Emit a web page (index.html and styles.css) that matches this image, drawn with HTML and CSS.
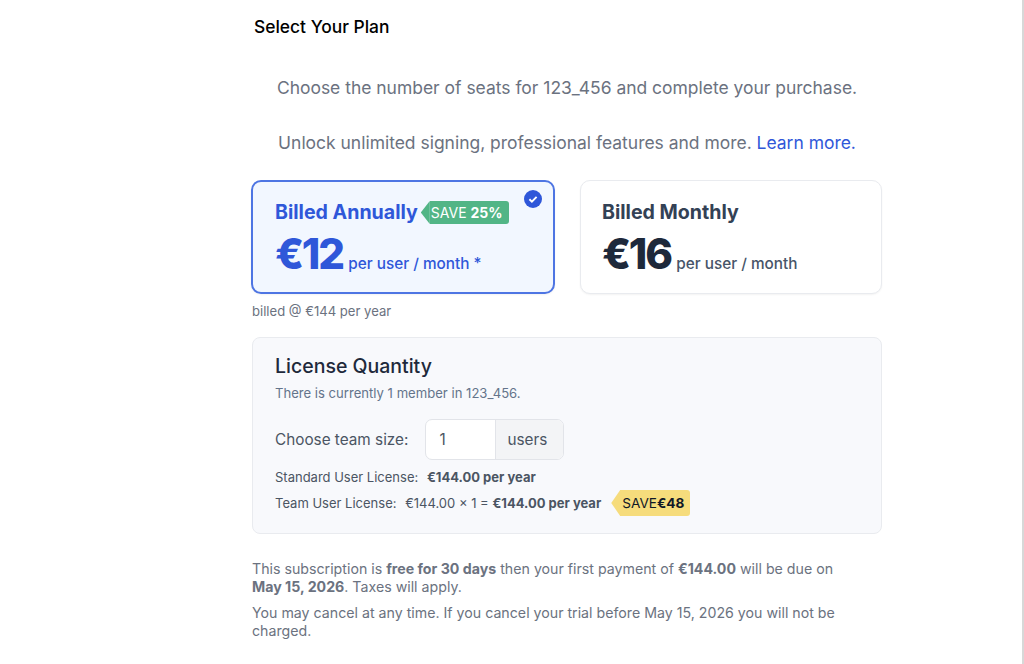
FILE: index.html
```html
<!DOCTYPE html>
<html lang="en">
<head>
  <meta charset="UTF-8" />
  <title>Select Your Plan</title>
  <link rel="stylesheet" href="styles.css">
</head>
<body>

<div class="page">
  <h1 class="page-title">Select Your Plan</h1>

  <div class="intro">
    <p>Choose the number of seats for 123_456 and complete your purchase.</p>
    <p>Unlock unlimited signing, professional features and more. <a href="#">Learn more.</a></p>
  </div>

  <div class="plans">
    <div class="plan-col">
      <div class="plan selected">
        <svg class="check" viewBox="0 0 18 18" width="18" height="18">
          <circle cx="9" cy="9" r="9" fill="#2f57d9"/>
          <path d="M5.4 9.2l2.5 2.4 4.7-4.8" fill="none" stroke="#fff" stroke-width="1.9"/>
        </svg>
        <div class="plan-head">
          <span class="plan-name">Billed Annually</span>
          <span class="tag tag-green">SAVE <b>25%</b></span>
        </div>
        <div class="plan-price"><span class="amount">€12</span> <span class="per">per user / month *</span></div>
      </div>
      <div class="billed-note">billed @ €144 per year</div>
    </div>

    <div class="plan-col">
      <div class="plan">
        <div class="plan-head">
          <span class="plan-name">Billed Monthly</span>
        </div>
        <div class="plan-price"><span class="amount">€16</span> <span class="per">per user / month</span></div>
      </div>
    </div>
  </div>

  <div class="quantity">
    <h2>License Quantity</h2>
    <div class="members">There is currently 1 member in 123_456.</div>
    <div class="team-size">
      <label>Choose team size:</label>
      <div class="seat-input">
        <span class="seat-value">1</span>
        <span class="seat-unit">users</span>
      </div>
    </div>
    <div class="line">Standard User License: <b class="first">€144.00 per year</b></div>
    <div class="line team-line">
      <span>Team User License: <span class="first">€144.00 × 1 =</span> <b>€144.00 per year</b></span>
      <span class="tag tag-yellow">SAVE<b>€48</b></span>
    </div>
  </div>

  <div class="terms">
    <p>This subscription is <b>free for 30 days</b> then your first payment of <b>€144.00</b> will be due on <b>May 15, 2026</b>. Taxes will apply.</p>
    <p>You may cancel at any time. If you cancel your trial before May 15, 2026 you will not be charged.</p>
  </div>
</div>

</body>
</html>
```

FILE: styles.css
```css
* {
  box-sizing: border-box;
}

html, body {
  height: 100%;
}

body {
  margin: 0;
  background: #fff;
  font-family: 'Inter', sans-serif;
  color: #6b7280;
  overflow: hidden;
  border-right: 2px solid #d8d8d8;
}

.page {
  width: 630px;
  margin-left: 252px;
}

.page-title {
  margin: 0;
  padding: 17px 0 0 2px;
  font-size: 17.4px;
  line-height: 20px;
  font-weight: 500;
  color: #000;
}

.intro {
  margin-top: 39px;
  text-align: center;
  font-size: 17.47px;
  line-height: 24px;
}

.intro p {
  margin: 0 0 31px;
}

.intro a {
  color: #2f57d9;
  text-decoration: none;
}

.plans {
  display: flex;
  gap: 25px;
  margin-top: -6px;
}

.plan-col:first-child {
  width: 303px;
}

.plan-col:last-child {
  width: 302px;
}

.plan {
  position: relative;
  height: 114px;
  padding: 19px 21px;
  background: #fff;
  border: 1px solid #e9ebef;
  border-radius: 10px;
  box-shadow: 0 1px 2px rgba(0, 0, 0, 0.05);
  color: #334155;
}

.plan.selected {
  width: 304px;
  margin-left: -1px;
  background: #f2f7ff;
  border: 2px solid #4e75e3;
  color: #2f57d9;
  padding: 18px 22px;
}

.check {
  position: absolute;
  top: 8px;
  right: 11px;
}

.plan-head {
  display: flex;
  align-items: center;
  height: 24px;
}

.plan-name {
  font-size: 19.6px;
  font-weight: 700;
  white-space: nowrap;
}

.plan-price {
  margin-top: 6px;
  white-space: nowrap;
}

.amount {
  font-size: 42px;
  line-height: 48px;
  font-weight: 800;
  letter-spacing: -2.2px;
  color: #1e293b;
}

.per {
  font-size: 15.3px;
  font-weight: 500;
  color: #475569;
  margin-left: 1px;
}

.selected .amount,
.selected .per {
  color: #2f57d9;
}

.tag {
  position: relative;
  display: inline-block;
  border-radius: 0 3px 3px 0;
  white-space: nowrap;
}

.tag::before {
  content: "";
  position: absolute;
  top: 0;
  bottom: 0;
  left: -9px;
  width: 9px;
  clip-path: polygon(100% 0, 0 50%, 100% 100%);
}

.tag-green {
  margin: 1px 0 0 12px;
  height: 23px;
  padding: 0 7px 0 1px;
  background: #52b586;
  color: #fff;
  font-size: 14px;
  line-height: 23px;
}

.tag-green::before {
  background: #52b586;
}

.tag-yellow {
  margin-left: 19px;
  height: 26px;
  padding: 0 6px 0 2px;
  background: #f6dc7c;
  color: #111827;
  font-size: 13.6px;
  line-height: 26px;
}

.tag-yellow::before {
  background: #f6dc7c;
}

.billed-note {
  margin-top: 9px;
  font-size: 13.1px;
  line-height: 16px;
}

.quantity {
  width: 630px;
  height: 197px;
  margin-top: 18px;
  padding: 16px 22px;
  background: #f8f9fc;
  border: 1px solid #e9ebef;
  border-radius: 8px;
  color: #4b5563;
}

.quantity h2 {
  margin: 0;
  font-size: 19.5px;
  line-height: 24px;
  font-weight: 500;
  color: #1e293b;
}

.members {
  margin-top: 7px;
  font-size: 13.1px;
  line-height: 16px;
  color: #64748b;
}

.team-size {
  display: flex;
  align-items: center;
  margin-top: 18px;
  font-size: 15.3px;
}

.seat-input {
  display: flex;
  height: 41px;
  width: 139px;
  margin-left: 17px;
  background: #fff;
  border: 1px solid #e2e4e9;
  border-radius: 7px;
  overflow: hidden;
  line-height: 39px;
}

.seat-value {
  width: 69px;
  padding-left: 13px;
}

.seat-unit {
  flex: 1;
  padding-left: 11px;
  background: #f3f4f6;
  border-left: 1px solid #e2e4e9;
}

.line {
  font-size: 13px;
  line-height: 16px;
  margin-top: 9px;
}

.line .first {
  margin-left: 5px;
}

.team-line {
  display: flex;
  align-items: center;
  height: 26px;
  margin-top: 5px;
}

.terms {
  margin-top: 26px;
  padding-right: 25px;
  font-size: 14.2px;
  line-height: 18px;
}

.terms p {
  margin: 0 0 8px;
}
```
